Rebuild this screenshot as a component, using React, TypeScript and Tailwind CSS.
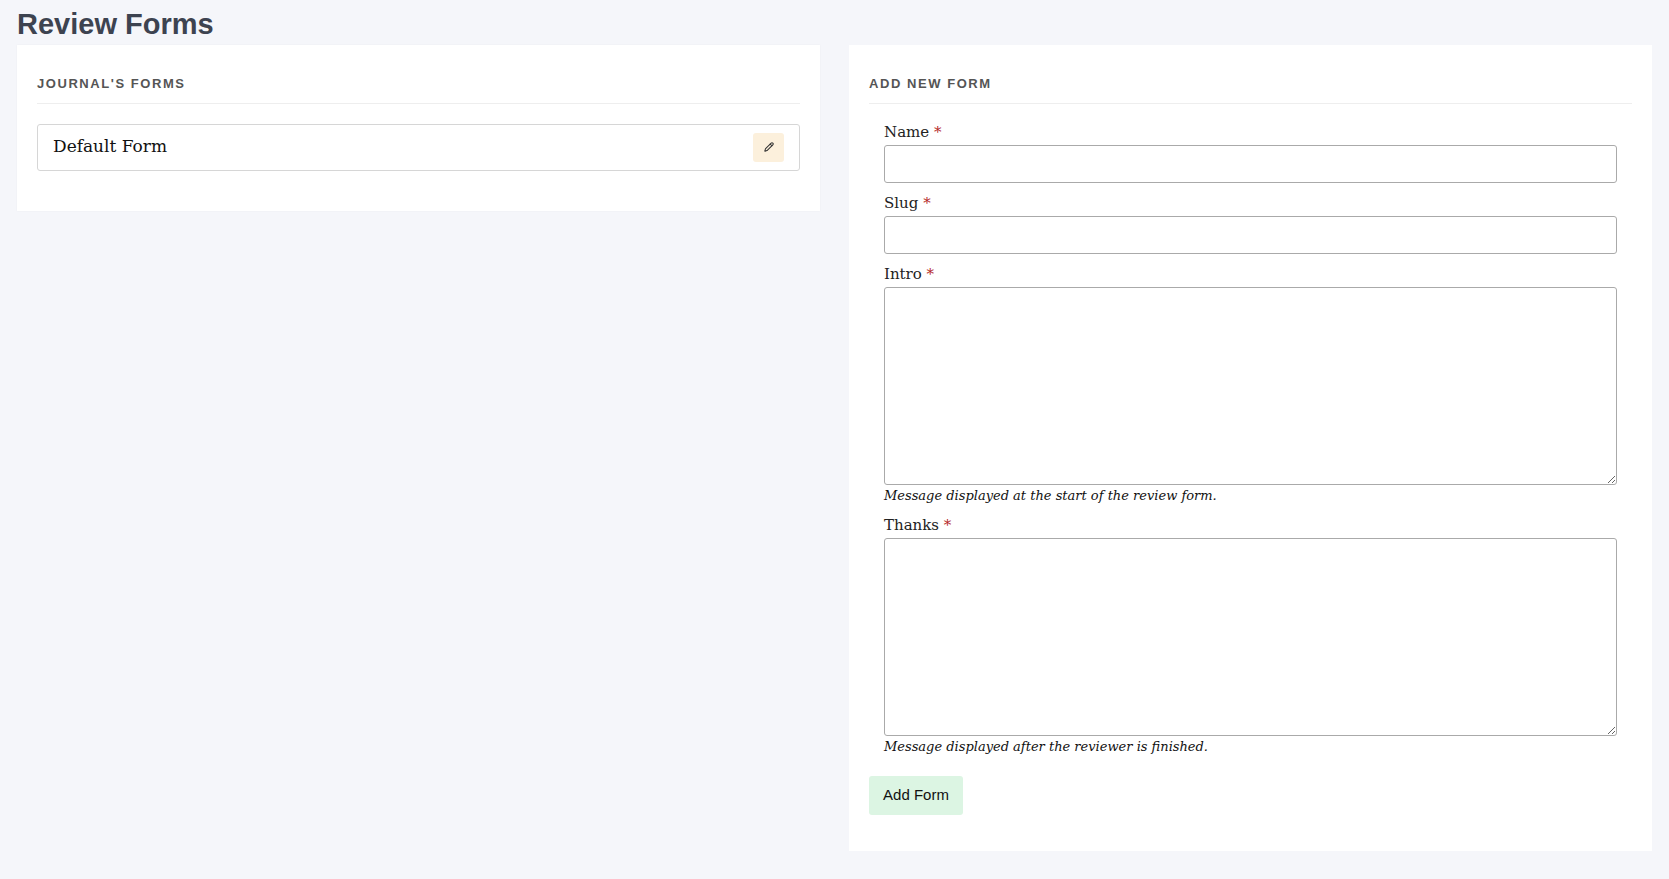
import { Pencil } from 'lucide-react'

function Field({ label, tall, help }: { label: string; tall?: boolean; help?: string }) {
  return (
    <div className="mb-[10px]">
      <label className="block text-[15px] leading-[20px] text-[#222] mb-[3px]">
        {label} <span className="text-[#b52a2a]">*</span>
      </label>
      {tall ? (
        <textarea className="block w-full h-[198px] rounded-[3px] border border-[#aaa] bg-white" />
      ) : (
        <input className="block w-full h-[38px] rounded-[3px] border border-[#aaa] bg-white" />
      )}
      {help && <p className="mt-[2px] text-[13px] italic leading-[18px] text-[#111]">{help}</p>}
    </div>
  )
}

export default function App() {
  return (
    <div className="min-h-[879px] bg-[#f5f6fa] px-[17px] pb-[19px]" style={{ fontFamily: '"DejaVu Serif", "Liberation Serif", serif' }}>
      <h1 className="pt-[6px] h-[45px] text-[29px] font-bold leading-[36px] text-[#3d4350]" style={{ fontFamily: '"Liberation Sans", Arial, sans-serif' }}>
        Review Forms
      </h1>
      <div className="flex items-start gap-[29px]">
        <div className="w-[803px] bg-white px-[20px] pt-[29px] pb-[40px] shadow-[0_0_2px_rgba(0,0,0,0.04)]">
          <h2 className="text-[13px] font-bold tracking-[0.12em] text-[#555] pb-[9px] border-b border-[#eee]" style={{ fontFamily: '"Liberation Sans", Arial, sans-serif' }}>
            JOURNAL'S FORMS
          </h2>
          <div className="mt-[20px] flex h-[47px] items-center justify-between rounded-[3px] border border-[#d6d6d6] pl-[15px] pr-[15px]">
            <span className="text-[17px] text-[#111]">Default Form</span>
            <button className="flex h-[29px] w-[31px] items-center justify-center rounded-[3px] bg-[#fcf0dc]">
              <Pencil size={10} strokeWidth={2.5} className="text-[#333]" />
            </button>
          </div>
        </div>
        <div className="w-[803px] bg-white px-[20px] pt-[29px] pb-[36px]">
          <h2 className="text-[13px] font-bold tracking-[0.12em] text-[#555] pb-[9px] border-b border-[#eee]" style={{ fontFamily: '"Liberation Sans", Arial, sans-serif' }}>
            ADD NEW FORM
          </h2>
          <div className="px-[15px] pt-[18px]">
            <Field label="Name" />
            <Field label="Slug" />
            <Field label="Intro" tall help="Message displayed at the start of the review form." />
            <Field label="Thanks" tall help="Message displayed after the reviewer is finished." />
          </div>
          <button className="mt-[10px] h-[39px] w-[94px] rounded-[3px] bg-[#dcf5e3] text-[15px] text-[#111]" style={{ fontFamily: '"Liberation Sans", Arial, sans-serif' }}>
            Add Form
          </button>
        </div>
      </div>
    </div>
  )
}
